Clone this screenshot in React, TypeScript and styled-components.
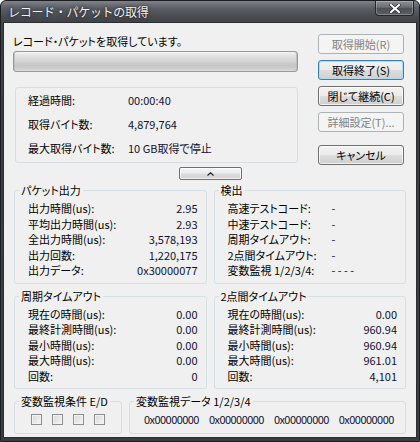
import React from 'react';
import styled, { createGlobalStyle } from 'styled-components';

const GlobalStyle = createGlobalStyle`
    html, body {
        margin: 0;
        padding: 0;
        background: #ffffff;
    }
    * {
        box-sizing: border-box;
    }
`;

const Window: any = styled.div`
    width: 420px;
    height: 442px;
    display: flex;
    flex-direction: column;
    padding: 0 2px 3px;
    border: 1px solid #1c1d20;
    border-radius: 6px 6px 0 0;
    background: linear-gradient(
        to bottom,
        #80848a 0px,
        #5c6066 7px,
        #43464b 18px,
        #3c3f44 40px,
        #3a3d41 100%
    );
    font-family: 'Noto Sans CJK JP', 'Noto Sans', sans-serif;
`;

const TitleBar: any = styled.div`
    flex: none;
    height: 21px;
    display: flex;
    justify-content: space-between;
    align-items: flex-start;
    padding-left: 5px;
`;

const Title: any = styled.span`
    font-size: 12px;
    line-height: 21px;
    letter-spacing: -0.3px;
    color: #f4f4f4;
    text-shadow: 0 0 4px rgba(0, 0, 0, 0.7), 0 0 1px rgba(0, 0, 0, 0.6);
`;

const CloseButton: any = styled.div`
    width: 39px;
    height: 15px;
    margin-right: 3px;
    display: flex;
    align-items: center;
    justify-content: center;
    border: 1px solid #25272a;
    border-top: none;
    border-radius: 0 0 4px 4px;
    background: linear-gradient(#8d9197, #6a6e74 45%, #4d5055 50%, #5b5f65);
    box-shadow: inset 0 0 0 1px rgba(255, 255, 255, 0.25);
`;

const Client: any = styled.div`
    flex: 1;
    display: flex;
    flex-direction: column;
    background: #f0f0f0;
    border: 1px solid #2a2c30;
    color: #000;
    font-size: 11px;
    font-feature-settings: 'palt';
`;

const TopArea: any = styled.div`
    display: flex;
    gap: 20px;
    padding: 11px 12px 0 9px;
`;

const MainColumn: any = styled.div`
    flex: 1;
    display: flex;
    flex-direction: column;
`;

const Status: any = styled.div`
    line-height: 14px;
    white-space: nowrap;
`;

const Progress: any = styled.div`
    margin-top: 3px;
    height: 21px;
    border: 1px solid #9a9a9a;
    border-radius: 3px;
    background: linear-gradient(
        to bottom,
        #f4f4f4 0%,
        #e2e2e2 20%,
        #d6d6d6 45%,
        #c6c6c6 70%,
        #cfcfcf 90%,
        #dcdcdc 100%
    );
    box-shadow: inset 1px 0 0 #bdbdbd, inset -1px 0 0 #bdbdbd;
`;

const InfoBox: any = styled.div`
    margin: 15px 0 0 2px;
    height: 76px;
    padding: 4px 0 6px 12px;
    border: 1px solid #d5dfe5;
    border-radius: 3px;
    display: grid;
    grid-template-columns: 100px 1fr;
    row-gap: 8px;
    line-height: 16px;
`;

const ButtonColumn: any = styled.div`
    width: 86px;
    display: flex;
    flex-direction: column;
    gap: 6px;
`;

const Button: any = styled.div`
    height: 20px;
    display: flex;
    align-items: center;
    justify-content: center;
    white-space: nowrap;
    border-radius: 3px;
    margin-top: ${(p: any) => (p.$gapAbove ? '7px' : '0')};
    border: 1px solid
        ${(p: any) =>
            p.$disabled ? '#adb2b5' : p.$default ? '#3c7fb1' : '#707070'};
    color: ${(p: any) => (p.$disabled ? '#838383' : '#000')};
    background: ${(p: any) =>
        p.$disabled
            ? '#f4f4f4'
            : 'linear-gradient(#f2f2f2 0%, #ebebeb 48%, #dddddd 52%, #cfcfcf 100%)'};
    box-shadow: inset 0 0 0 1px
        ${(p: any) =>
            p.$disabled
                ? '#f4f4f4'
                : p.$default
                ? '#a8dcf7'
                : 'rgba(255, 255, 255, 0.7)'};
`;

const CollapseRow: any = styled.div`
    margin-top: 2px;
    display: flex;
    justify-content: center;
`;

const CollapseButton: any = styled.div`
    width: 63px;
    height: 13px;
    display: flex;
    align-items: center;
    justify-content: center;
    border: 1px solid #707070;
    border-radius: 2px;
    background: linear-gradient(#f4f4f4 0%, #ebebeb 48%, #dddddd 52%, #d2d2d2 100%);
    box-shadow: inset 0 0 0 1px rgba(255, 255, 255, 0.7);
`;

const Groups: any = styled.div`
    margin-top: 4px;
    padding: 0 10px;
    display: flex;
    flex-direction: column;
    gap: 6px;
`;

const GroupRow: any = styled.div`
    display: grid;
    grid-template-columns: ${(p: any) => p.$cols || '1fr 1fr'};
    column-gap: 7px;
`;

const Group: any = styled.fieldset`
    margin: 0;
    min-width: 0;
    padding: 0 8px 0 4px;
    border: 1px solid #d5dfe5;
    border-radius: 3px;
`;

const Legend: any = styled.legend`
    padding: 0 2px;
    line-height: 13px;
    white-space: nowrap;
`;

const Rows: any = styled.div`
    display: grid;
    grid-template-columns: ${(p: any) => (p.$left ? '104px 1fr' : '1fr auto')};
    padding: 4px 0 4px 9px;
    line-height: 15.5px;
    white-space: nowrap;
`;

const Value: any = styled.span`
    color: #101030;
    text-align: ${(p: any) => (p.$left ? 'left' : 'right')};
`;

const Checks: any = styled.div`
    display: flex;
    justify-content: center;
    gap: 10px;
    padding: 6px 0 8px 4px;
`;

const Check: any = styled.span`
    width: 11px;
    height: 11px;
    border: 1px solid #8f8f8f;
    background: linear-gradient(135deg, #d8d8d8, #f6f6f6);
    box-shadow: inset 0 0 0 1px #f2f2f2;
`;

const DataValues: any = styled.div`
    display: flex;
    gap: 10px;
    padding: 5px 0 7px 10px;
    line-height: 13px;
    letter-spacing: -0.55px;
    color: #101030;
`;

type Row = [string, string];

const packetRows: Row[] = [
    ['出力時間(us):', '2.95'],
    ['平均出力時間(us):', '2.93'],
    ['全出力時間(us):', '3,578,193'],
    ['出力回数:', '1,220,175'],
    ['出力データ:', '0x30000077'],
];

const detectRows: Row[] = [
    ['高速テストコード:', '-'],
    ['中速テストコード:', '-'],
    ['周期タイムアウト:', '-'],
    ['2点間タイムアウト:', '-'],
    ['変数監視 1/2/3/4:', '- - - -'],
];

const cycleRows: Row[] = [
    ['現在の時間(us):', '0.00'],
    ['最終計測時間(us):', '0.00'],
    ['最小時間(us):', '0.00'],
    ['最大時間(us):', '0.00'],
    ['回数:', '0'],
];

const pointRows: Row[] = [
    ['現在の時間(us):', '0.00'],
    ['最終計測時間(us):', '960.94'],
    ['最小時間(us):', '960.94'],
    ['最大時間(us):', '961.01'],
    ['回数:', '4,101'],
];

const StatGroup = ({ title, rows, left }: { title: string; rows: Row[]; left?: boolean }) => (
    <Group>
        <Legend>{title}</Legend>
        <Rows $left={left}>
            {rows.map(([label, value]) => (
                <React.Fragment key={label}>
                    <span>{label}</span>
                    <Value $left={left}>{value}</Value>
                </React.Fragment>
            ))}
        </Rows>
    </Group>
);

const App = () => {
    return (
        <>
            <GlobalStyle />
            <Window>
                <TitleBar>
                    <Title>レコード・パケットの取得</Title>
                    <CloseButton>
                        <svg width='12' height='9' viewBox='0 0 12 9'>
                            <path
                                d='M2 1 L10 8 M10 1 L2 8'
                                stroke='#2a2c30'
                                strokeWidth='3.4'
                                strokeLinecap='square'
                            />
                            <path
                                d='M2 1 L10 8 M10 1 L2 8'
                                stroke='#ffffff'
                                strokeWidth='2'
                                strokeLinecap='square'
                            />
                        </svg>
                    </CloseButton>
                </TitleBar>
                <Client>
                    <TopArea>
                        <MainColumn>
                            <Status>レコード・パケットを取得しています。</Status>
                            <Progress />
                            <InfoBox>
                                <span>経過時間:</span>
                                <Value $left>00:00:40</Value>
                                <span>取得バイト数:</span>
                                <Value $left>4,879,764</Value>
                                <span>最大取得バイト数:</span>
                                <Value $left>10 GB取得で停止</Value>
                            </InfoBox>
                        </MainColumn>
                        <ButtonColumn>
                            <Button $disabled>取得開始(R)</Button>
                            <Button $default>取得終了(S)</Button>
                            <Button>閉じて継続(C)</Button>
                            <Button $disabled>詳細設定(T)...</Button>
                            <Button $gapAbove>キャンセル</Button>
                        </ButtonColumn>
                    </TopArea>
                    <CollapseRow>
                        <CollapseButton>
                            <svg width='7' height='4' viewBox='0 0 7 4'>
                                <path d='M0.5 3.5 L3.5 0.8 L6.5 3.5' fill='none' stroke='#222' strokeWidth='1.2' />
                            </svg>
                        </CollapseButton>
                    </CollapseRow>
                    <Groups>
                        <GroupRow>
                            <StatGroup title='パケット出力' rows={packetRows} />
                            <StatGroup title='検出' rows={detectRows} left />
                        </GroupRow>
                        <GroupRow>
                            <StatGroup title='周期タイムアウト' rows={cycleRows} />
                            <StatGroup title='2点間タイムアウト' rows={pointRows} />
                        </GroupRow>
                        <GroupRow $cols='108px 1fr'>
                            <Group>
                                <Legend>変数監視条件 E/D</Legend>
                                <Checks>
                                    <Check />
                                    <Check />
                                    <Check />
                                    <Check />
                                </Checks>
                            </Group>
                            <Group>
                                <Legend>変数監視データ 1/2/3/4</Legend>
                                <DataValues>
                                    <span>0x00000000</span>
                                    <span>0x00000000</span>
                                    <span>0x00000000</span>
                                    <span>0x00000000</span>
                                </DataValues>
                            </Group>
                        </GroupRow>
                    </Groups>
                </Client>
            </Window>
        </>
    );
};

export default App;
